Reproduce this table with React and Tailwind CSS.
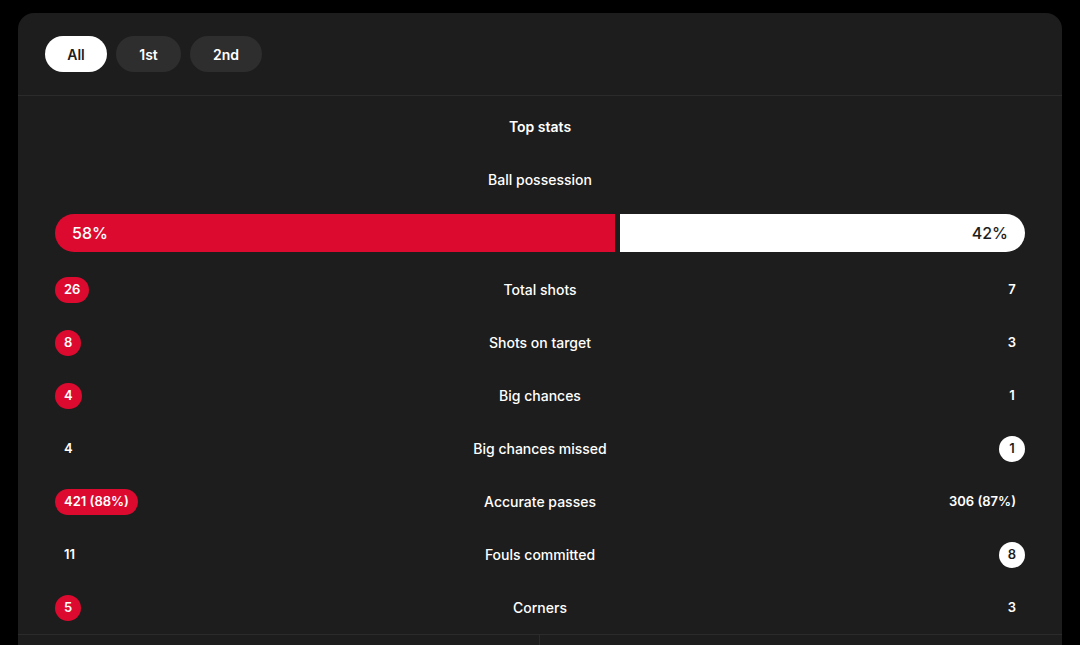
import React from 'react';

const stats = [
    { label: 'Total shots', home: '26', away: '7', win: 'home' },
    { label: 'Shots on target', home: '8', away: '3', win: 'home' },
    { label: 'Big chances', home: '4', away: '1', win: 'home' },
    { label: 'Big chances missed', home: '4', away: '1', win: 'away' },
    { label: 'Accurate passes', home: '421 (88%)', away: '306 (87%)', win: 'home' },
    { label: 'Fouls committed', home: '11', away: '8', win: 'away' },
    { label: 'Corners', home: '5', away: '3', win: 'home' },
];

const Value = ({ value, highlight, side }) => {
    const base = 'h-[26px] min-w-[26px] px-[9px] rounded-full flex items-center justify-center text-[13px] font-semibold';
    if (highlight && side === 'home') return <span className={`${base} bg-[#dc0a2f] text-white`}>{value}</span>;
    if (highlight && side === 'away') return <span className={`${base} bg-white text-[#1d1d1d]`}>{value}</span>;
    return <span className={`${base} text-white`}>{value}</span>;
};

const App = () => {
    return (
        <div className="w-[1080px] h-[645px] bg-black overflow-hidden pt-[13px] px-[18px]" style={{ fontFamily: 'Inter, "Noto Sans", sans-serif' }}>
            <div className="bg-[#1d1d1d] rounded-t-[16px] h-[700px]">
                {/* Period tabs */}
                <div className="flex items-center gap-[9px] px-[27px] pt-[23px] pb-[23px] border-b border-[#2b2b2b]">
                    <button className="h-[36px] w-[62px] rounded-full bg-white text-[#1d1d1d] text-[14px] font-semibold">All</button>
                    <button className="h-[36px] w-[65px] rounded-full bg-[#2e2e2e] text-white text-[14px] font-semibold">1st</button>
                    <button className="h-[36px] w-[72px] rounded-full bg-[#2e2e2e] text-white text-[14px] font-semibold">2nd</button>
                </div>

                <div className="px-[37px]">
                    <div className="h-[60px] flex items-center justify-center text-white text-[14px] font-semibold">Top stats</div>
                    <div className="h-[46px] flex items-center justify-center text-white text-[14px] font-medium">Ball possession</div>

                    {/* Possession bar */}
                    <div className="mt-[12px] flex gap-[5px] h-[38px]">
                        <div className="w-[560px] bg-[#dc0a2f] rounded-l-full flex items-center pl-[17px] text-white text-[16px] font-medium">58%</div>
                        <div className="flex-1 bg-white rounded-r-full flex items-center justify-end pr-[17px] text-[#1d1d1d] text-[16px] font-medium">42%</div>
                    </div>

                    <div className="mt-[11px]">
                        {stats.map((s) => (
                            <div key={s.label} className="h-[53px] flex items-center justify-between">
                                <div className="w-[200px] flex">
                                    <Value value={s.home} highlight={s.win === 'home'} side="home" />
                                </div>
                                <div className="text-white text-[14px] font-medium">{s.label}</div>
                                <div className="w-[200px] flex justify-end">
                                    <Value value={s.away} highlight={s.win === 'away'} side="away" />
                                </div>
                            </div>
                        ))}
                    </div>
                </div>

                <div className="grid grid-cols-2 border-t border-[#2b2b2b] h-[40px]">
                    <div className="border-r border-[#2b2b2b]"></div>
                    <div></div>
                </div>
            </div>
        </div>
    );
};

export default App;
